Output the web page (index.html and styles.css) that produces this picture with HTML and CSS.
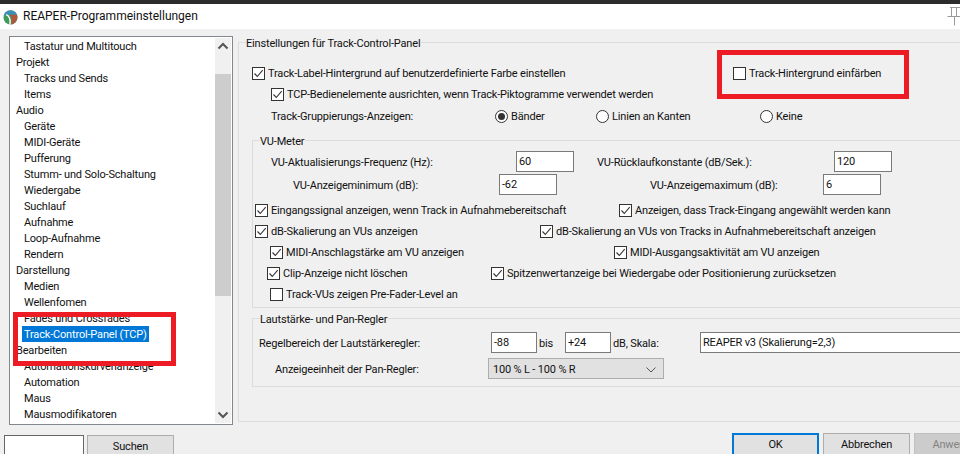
FILE: index.html
```html
<!DOCTYPE html>
<html lang="de">
<head>
<meta charset="utf-8">
<title>REAPER-Programmeinstellungen</title>
<link rel="stylesheet" href="styles.css">
</head>
<body>
<svg class="defs" width="0" height="0" aria-hidden="true"><symbol id="tick" viewBox="0 0 11 11"><path d="M1.5 5.5 4.3 8.5 9.7 2.2" fill="none" stroke="#333" stroke-width="1.1"/></symbol></svg>
<div class="window">
  <div class="topbar"></div>
  <header class="titlebar">
    <svg class="logo" viewBox="0 0 16 16"><circle cx="8" cy="8" r="7.500" fill="#3f9a5c"/><path d="M1 5A7.500 7.500 0 0 1 15 5L11.500 6.500A4 4 0 0 0 4.500 6.500Z" fill="#3d8fb8"/><path d="M7.500 5H14.800Q16.500 9 13 13 11 15.300 8.500 15.500 10.500 9 7.500 5Z" fill="#b4553e"/><path d="M3.500 5Q8.500 7.500 7.500 15.500" fill="none" stroke="#fff" stroke-width="1.500"/></svg>
    <span class="title-text">REAPER-Programmeinstellungen</span>
    <svg class="pin" viewBox="0 0 13 19"><path d="M3 .5H13M4.500 .5V9M9.500 .5V9M.5 9.500H13M7.500 9.500V18.500" fill="none" stroke="#9a9a9a" stroke-width="1"/></svg>
  </header>
  <div class="content">
    <aside class="side">
      <div class="list">
        <ul class="items">
          <li class="sub">Tastatur und Multitouch</li>
          <li>Projekt</li>
          <li class="sub">Tracks und Sends</li>
          <li class="sub">Items</li>
          <li>Audio</li>
          <li class="sub">Geräte</li>
          <li class="sub">MIDI-Geräte</li>
          <li class="sub">Pufferung</li>
          <li class="sub">Stumm- und Solo-Schaltung</li>
          <li class="sub">Wiedergabe</li>
          <li class="sub">Suchlauf</li>
          <li class="sub">Aufnahme</li>
          <li class="sub">Loop-Aufnahme</li>
          <li class="sub">Rendern</li>
          <li>Darstellung</li>
          <li class="sub">Medien</li>
          <li class="sub">Wellenfomen</li>
          <li class="sub">Fades und Crossfades</li>
          <li class="sub"><span class="selected">Track-Control-Panel (TCP)</span></li>
          <li>Bearbeiten</li>
          <li class="sub">Automationskurvenanzeige</li>
          <li class="sub">Automation</li>
          <li class="sub">Maus</li>
          <li class="sub">Mausmodifikatoren</li>
        </ul>
        <div class="scrollbar">
          <svg class="arrow" viewBox="0 0 16 16"><path d="M3.500 10 8 5.500 12.500 10" fill="none" stroke="#555" stroke-width="2"/></svg>
          <div class="thumb"></div>
          <svg class="arrow arrow-down" viewBox="0 0 16 16"><path d="M3.500 6 8 10.500 12.500 6" fill="none" stroke="#555" stroke-width="2"/></svg>
        </div>
      </div>
      <div class="search">
        <div class="search-input"></div>
        <div class="btn search-btn">Suchen</div>
      </div>
    </aside>
    <main class="main">
      <section class="group outer">
        <div class="group-title outer-title">Einstellungen für Track-Control-Panel</div>
        <div class="row r-label">
          <label class="check"><span class="box"><svg><use href="#tick"/></svg></span>Track-Label-Hintergrund auf benutzerdefinierte Farbe einstellen</label>
          <label class="check"><span class="box"></span>Track-Hintergrund einfärben</label>
        </div>
        <div class="row r-align">
          <label class="check"><span class="box"><svg><use href="#tick"/></svg></span>TCP-Bedienelemente ausrichten, wenn Track-Piktogramme verwendet werden</label>
        </div>
        <div class="row r-group">
          <span>Track-Gruppierungs-Anzeigen:</span>
          <label class="radio"><span class="dot on"></span>Bänder</label>
          <label class="radio"><span class="dot"></span>Linien an Kanten</label>
          <label class="radio"><span class="dot"></span>Keine</label>
        </div>

        <section class="group vu">
          <div class="group-title">VU-Meter</div>
          <div class="row r-freq">
            <span>VU-Aktualisierungs-Frequenz (Hz):</span><span class="field">60</span>
            <span>VU-Rücklaufkonstante (dB/Sek.):</span><span class="field">120</span>
          </div>
          <div class="row r-range">
            <span>VU-Anzeigeminimum (dB):</span><span class="field">-62</span>
            <span>VU-Anzeigemaximum (dB):</span><span class="field">6</span>
          </div>
          <div class="row r-c1">
            <label class="check tight"><span class="box"><svg><use href="#tick"/></svg></span>Eingangssignal anzeigen, wenn Track in Aufnahmebereitschaft</label>
            <label class="check"><span class="box"><svg><use href="#tick"/></svg></span>Anzeigen, dass Track-Eingang angewählt werden kann</label>
          </div>
          <div class="row r-c2">
            <label class="check tight"><span class="box"><svg><use href="#tick"/></svg></span>dB-Skalierung an VUs anzeigen</label>
            <label class="check tight"><span class="box"><svg><use href="#tick"/></svg></span>dB-Skalierung an VUs von Tracks in Aufnahmebereitschaft anzeigen</label>
          </div>
          <div class="row r-c3">
            <label class="check tight"><span class="box"><svg><use href="#tick"/></svg></span>MIDI-Anschlagstärke am VU anzeigen</label>
            <label class="check tight"><span class="box"><svg><use href="#tick"/></svg></span>MIDI-Ausgangsaktivität am VU anzeigen</label>
          </div>
          <div class="row r-c4">
            <label class="check"><span class="box"><svg><use href="#tick"/></svg></span>Clip-Anzeige nicht löschen</label>
            <label class="check"><span class="box"><svg><use href="#tick"/></svg></span>Spitzenwertanzeige bei Wiedergabe oder Positionierung zurücksetzen</label>
          </div>
          <div class="row r-c5">
            <label class="check"><span class="box"></span>Track-VUs zeigen Pre-Fader-Level an</label>
          </div>
        </section>

        <section class="group vol">
          <div class="group-title">Lautstärke- und Pan-Regler</div>
          <div class="row r-vol">
            <span>Regelbereich der Lautstärkeregler:</span>
            <span class="field">-88</span><span>bis</span>
            <span class="field">+24</span><span>dB, Skala:</span>
            <span class="field scale">REAPER v3 (Skalierung=2,3)</span>
          </div>
          <div class="row r-pan">
            <span>Anzeigeeinheit der Pan-Regler:</span>
            <span class="select">100 % L - 100 % R<svg class="chev" viewBox="0 0 10 6"><path d="M.5 .5 5 5 9.500 .5" fill="none" stroke="#555"/></svg></span>
          </div>
        </section>
      </section>
      <footer class="actions">
        <div class="btn ok">OK</div>
        <div class="btn">Abbrechen</div>
        <div class="btn off">Anwenden</div>
      </footer>
    </main>
  </div>
</div>
<div class="mark mark-list"></div>
<div class="mark mark-check"></div>
</body>
</html>
```
FILE: styles.css
```css
* { box-sizing: border-box; }
html, body { margin: 0; width: 960px; height: 454px; overflow: hidden; }
body { position: relative; background: #f0f0f0; color: #111; font: 11px/18px Roboto, sans-serif; letter-spacing: -.17px; }
.defs { position: absolute; }
ul { list-style: none; margin: 0; padding: 0; }

.window { width: 960px; height: 454px; overflow: hidden; display: flex; flex-direction: column; }
.topbar { height: 4px; background: #2c2c2c; flex: none; }
.titlebar { height: 25px; flex: none; background: #fff; display: flex; align-items: center; padding-left: 3px; font-size: 12px; letter-spacing: 0; }
.logo { width: 15px; height: 15px; flex: none; margin-top: 1px; }
.title-text { margin: 0 0 2px 5px; }
.pin { width: 13px; height: 19px; margin-left: auto; flex: none; }

.content { display: flex; flex: 1; min-height: 0; }
.side { width: 238px; flex: none; padding: 7px 0 0 4px; }
.list { margin-left: 5px; width: 224px; height: 389px; background: #fff; border: 1px solid #828790; display: flex; padding: 1px 1px 1px 0; }
.items { flex: 1; min-width: 0; padding-left: 6px; overflow: hidden; color: #111; }
.items li { height: 16px; white-space: nowrap; }
.items .sub { padding-left: 8px; }
.selected { background: #0078d7; color: #fff; display: inline-block; height: 16px; padding: 0 2px; margin-left: -2px; }
.scrollbar { width: 16px; flex: none; background: #f0f0f0; display: flex; flex-direction: column; }
.arrow { width: 16px; height: 17px; flex: none; }
.thumb { height: 222px; margin-top: 19px; background: #cdcdcd; }
.arrow-down { margin-top: auto; }
.search { display: flex; gap: 3px; margin-top: 10px; }
.search-input { width: 80px; height: 30px; background: #fff; border: 1px solid #666; }
.btn { width: 87px; height: 30px; background: #e1e1e1; border: 1px solid #adadad; text-align: center; padding-top: 2px; flex: none; }
.search-btn { width: 87px; }

.main { flex: 1; min-width: 0; padding-top: 13px; }
.group { border: 1px solid #dcdcdc; }
.group-title { width: fit-content; height: 16px; background: #f0f0f0; margin: -8px 0 0 7px; padding: 0 1px 0 0; }
.outer { width: 800px; height: 380px; }
.vu, .vol { width: 800px; margin-left: 13px; }
.row { display: grid; align-items: center; height: 21px; white-space: nowrap; }
.row > span:not(.field):not(.select) { height: 16px; }
.check, .radio { display: flex; align-items: flex-start; gap: 3px; height: 16px; }
.box { width: 13px; height: 13px; flex: none; margin-top: 2px; background: #fff; border: 1px solid #333; display: block; }
.box svg { display: block; width: 11px; height: 11px; }
.dot { width: 13px; height: 13px; flex: none; margin-top: 2px; border: 1px solid #333; border-radius: 50%; background: #fff; display: flex; align-items: center; justify-content: center; }
.dot.on::before { content: ""; width: 7px; height: 7px; border-radius: 50%; background: #333; }
.field { height: 21px; background: #fff; border: 1px solid #7a7a7a; padding: 1px 0 0 2px; display: block; }
.select { height: 21px; width: 176px; background: #e1e1e1; border: 1px solid #adadad; padding: 2px 0 0 4px; display: flex; align-items: center; justify-content: space-between; }
.chev { width: 10px; height: 6px; margin-right: 7px; }

.r-label { margin-top: 11px; padding-left: 13px; grid-template-columns: 481px auto; }
.r-align { padding-left: 32px; }
.r-group { margin-top: 1px; padding-left: 32px; grid-template-columns: 224px 101px 164px auto; }

.vu { margin-top: 14px; height: 168px; }
.r-freq { margin-top: 2px; padding-left: 18px; grid-template-columns: 245px 58px 23px 237px 58px; }
.r-range { margin-top: 2px; padding-left: 40px; grid-template-columns: 206px 58px 93px 173px 58px; }
.r-c1 { margin-top: 4px; padding-left: 2px; grid-template-columns: 364px auto; }
.r-c2 { padding-left: 2px; grid-template-columns: 285px auto; }
.r-c3 { padding-left: 17px; grid-template-columns: 344px auto; }
.r-c4 { padding-left: 14px; grid-template-columns: 224px auto; }
.r-c5 { padding-left: 17px; }
.r-freq span:nth-child(3) { grid-column: 4; }
.r-freq span:nth-child(4) { grid-column: 5; }
.r-range span:nth-child(3) { grid-column: 4; }
.r-range span:nth-child(4) { grid-column: 5; }

.vol { margin-top: 10px; height: 69px; }
.r-vol { padding-left: 6px; margin-top: 5px; grid-template-columns: 232px 46px 28px 46px 89px 280px; }
.r-vol > span:nth-child(3), .r-vol > span:nth-child(5) { padding-left: 2px; }
.r-pan { padding-left: 22px; margin-top: 5px; grid-template-columns: 213px 176px; }

.actions { display: flex; gap: 4px; padding: 11px 0 0 494px; }
.ok { border: 2px solid #0078d7; padding-top: 1px; }
.off { background: #ccc; border-color: #bfbfbf; color: #838383; }

.mark { position: absolute; border: 5px solid #ed1c24; }
.mark-list { left: 13px; top: 312px; width: 163px; height: 54px; }
.mark-check { left: 717px; top: 50px; width: 192px; height: 49px; }
```
